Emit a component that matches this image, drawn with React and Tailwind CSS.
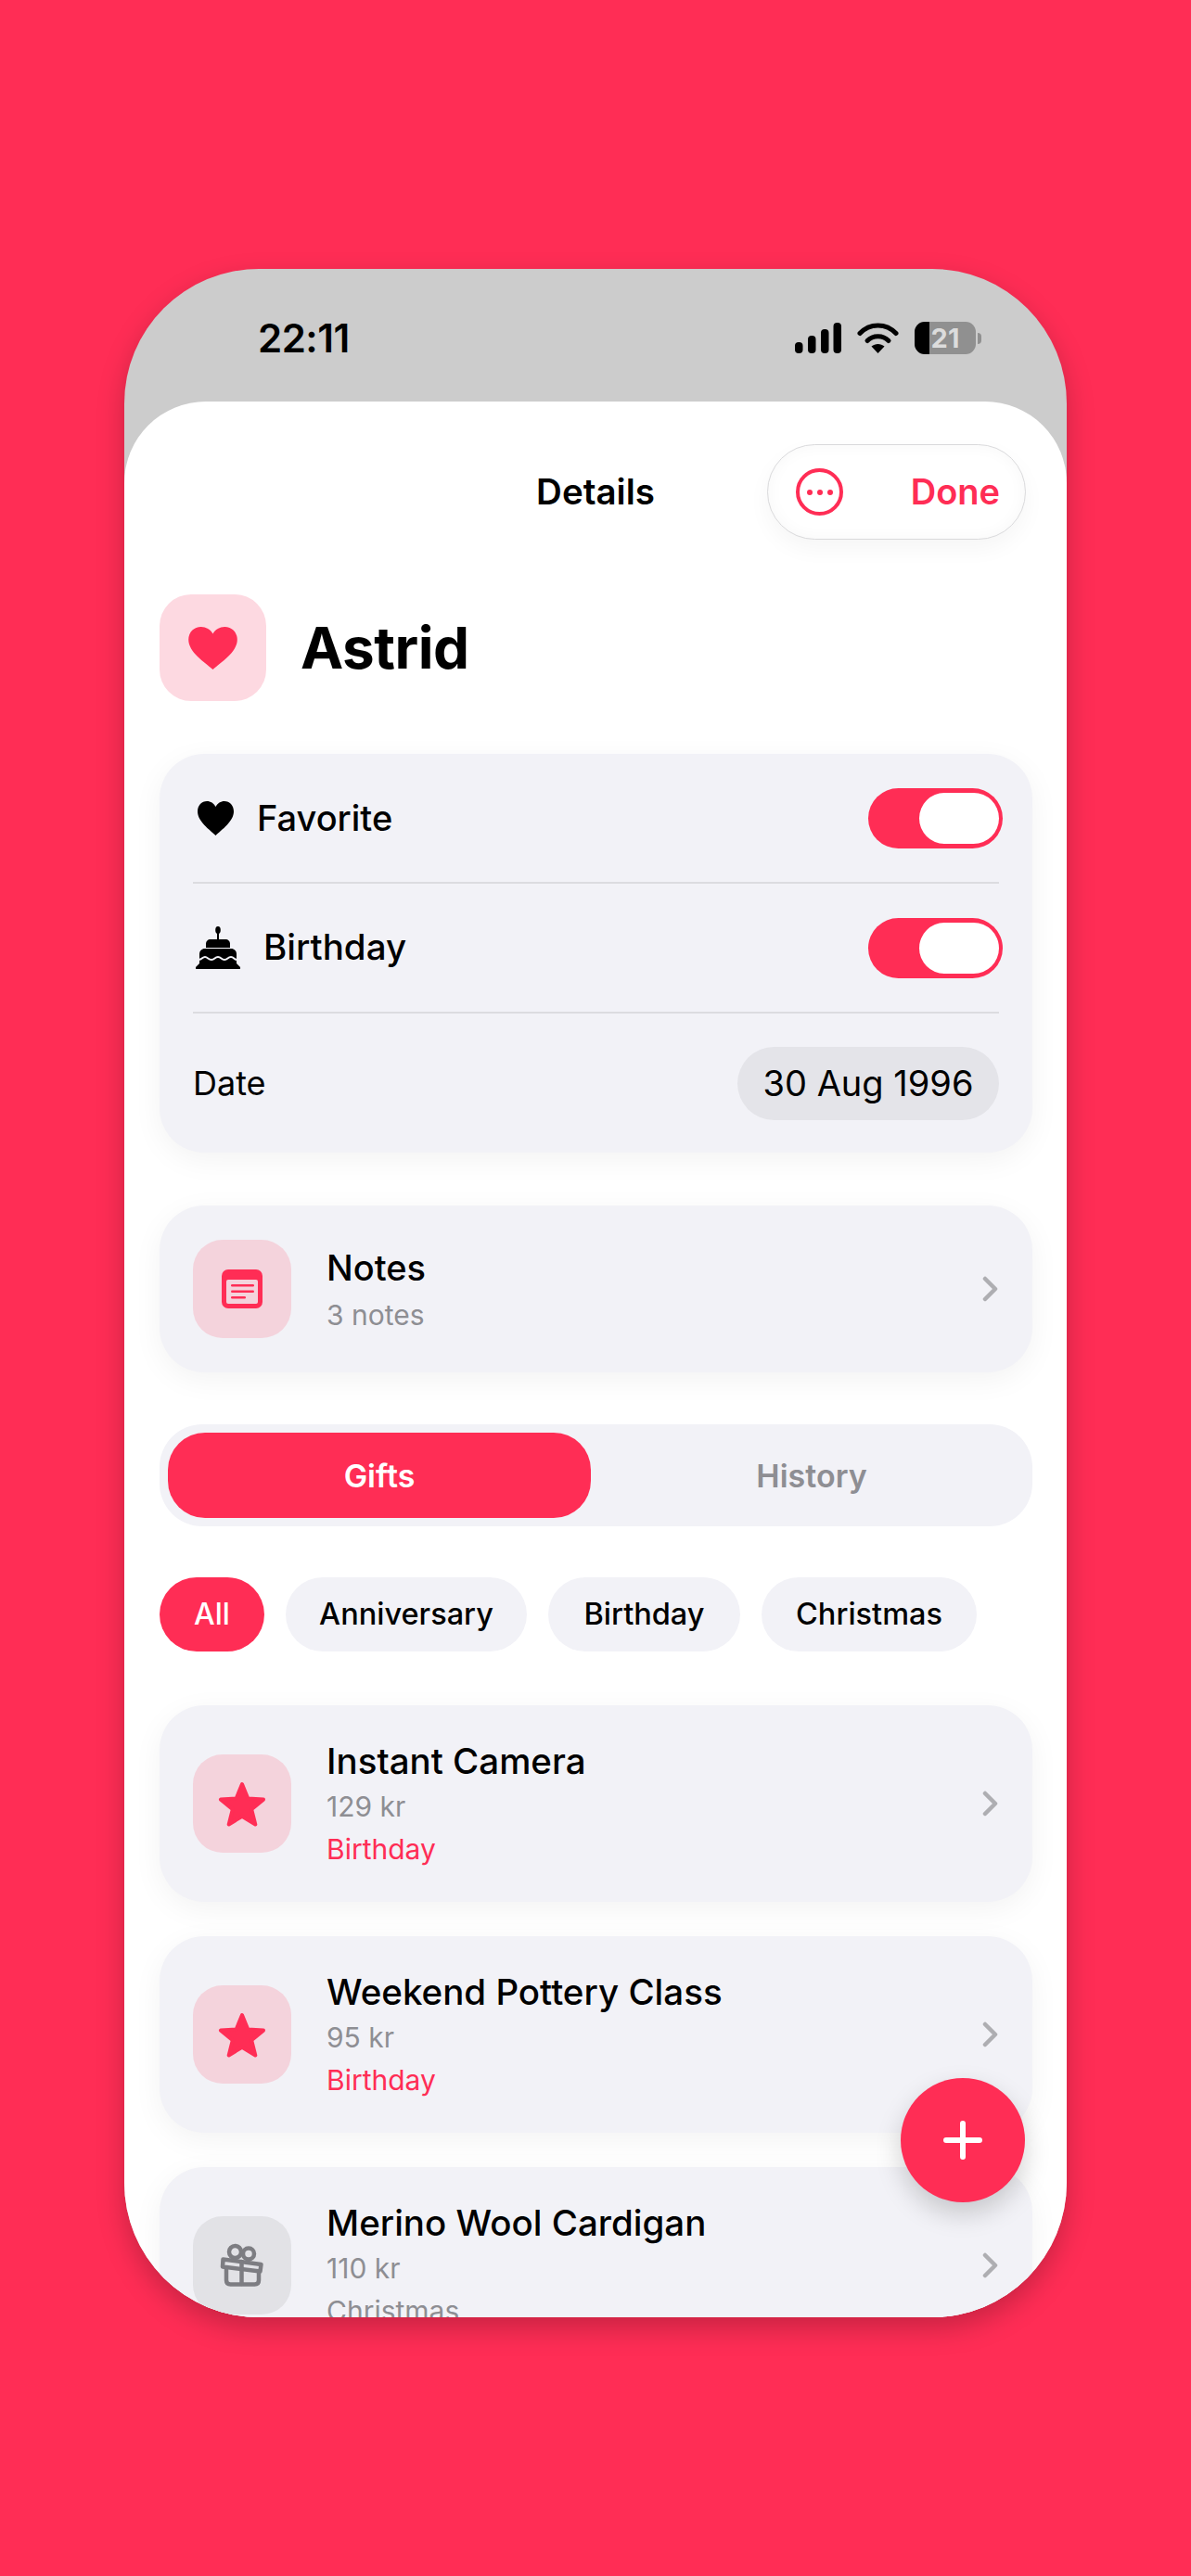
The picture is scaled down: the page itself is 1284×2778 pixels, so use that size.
import React from 'react';

const Heart = ({ className, stretch }) => (
  <svg viewBox="0 0 24 21" className={className} fill="currentColor" preserveAspectRatio={stretch ? 'none' : 'xMidYMid meet'}>
    <path d="M12 21C8 17.5 0 12.5 0 6.3 0 2.6 2.8 0 6.2 0 8.6 0 10.8 1.3 12 3.4 13.2 1.3 15.4 0 17.8 0 21.2 0 24 2.6 24 6.3 24 12.5 16 17.5 12 21Z" />
  </svg>
);

const Cake = () => (
  <svg viewBox="0 0 48 46" className="w-[48px] h-[46px] text-black" fill="currentColor">
    <ellipse cx="24" cy="4" rx="2.8" ry="4" />
    <rect x="23" y="6" width="2" height="9" />
    <path d="M11 23v-4c0-3 2-5 5-5h16c3 0 5 2 5 5v4z" />
    <path d="M4 40V30c0-3.500 2.500-6 6-6h28c3.500 0 6 2.500 6 6v10z" />
    <path d="M4 40h40l4 4v2H0v-2z" />
    <path d="M3 36c4 0 4-3 7-3s3.500 3 7 3 3.500-3 7-3 3.500 3 7 3 3.500-3 7-3 3 3 7 3" fill="none" stroke="#f2f2f7" strokeWidth="2" />
  </svg>
);

const Chevron = () => (
  <svg viewBox="0 0 19 28" className="w-[19px] h-[28px] text-[#aeaeb2]" fill="none" stroke="currentColor" strokeWidth="4.500" strokeLinecap="round" strokeLinejoin="round">
    <path d="M4 3l11 11L4 25" />
  </svg>
);

const Star = () => (
  <svg viewBox="0 0 52 49" className="w-[52px] h-[49px] text-[#ff2d55]" fill="currentColor" stroke="currentColor" strokeWidth="4" strokeLinejoin="round">
    <path d="M26 3l6.300 15.400 16.700 1.200-12.800 10.700 4.100 16.200L26 37.700l-14.300 8.800 4.100-16.200L3 19.600l16.700-1.200z" />
  </svg>
);

const NoteIcon = () => (
  <svg viewBox="0 0 44 42" className="w-[44px] h-[42px]">
    <rect width="44" height="42" rx="7" fill="#ff2d55" />
    <rect x="5" y="11" width="34" height="26" rx="2" fill="#f4d3dc" />
    <rect x="10" y="16" width="25" height="2.600" rx="1.300" fill="#ff2d55" />
    <rect x="10" y="22.500" width="25" height="2.600" rx="1.300" fill="#ff2d55" />
    <rect x="10" y="29" width="16" height="2.600" rx="1.300" fill="#ff2d55" />
  </svg>
);

const GiftIcon = () => (
  <svg viewBox="0 0 64 64" className="w-[64px] h-[64px] text-[#7d7d82]" fill="none" stroke="currentColor" strokeWidth="4.500" strokeLinejoin="round" strokeLinecap="round">
    <path d="M11.500 25.500L52.500 31l-1 7.500-40.500-5z" />
    <path d="M15 35v13c0 3 1.500 4.500 4.500 4.500h26c3 0 4.500-1.500 4.500-4.500V38" />
    <path d="M31.500 28v24" />
    <circle cx="24.500" cy="17.500" r="6.500" />
    <circle cx="39" cy="19.500" r="6" />
  </svg>
);

const Signal = () => (
  <svg viewBox="0 0 50 33" className="w-[50px] h-[33px]" fill="#000">
    <rect x="0" y="21" width="8.500" height="12" rx="4" />
    <rect x="14" y="14" width="8.500" height="19" rx="4" />
    <rect x="28" y="7" width="8.500" height="26" rx="4" />
    <rect x="41.500" y="0" width="8.500" height="33" rx="4" />
  </svg>
);

const Wifi = () => (
  <svg viewBox="0 0 45 33" className="w-[45px] h-[33px]" fill="none" stroke="#000" strokeWidth="5" strokeLinecap="round">
    <path d="M3 11.500C13.500 0 31.500 0 42 11.500" />
    <path d="M11 19.500C17 13 28 13 34 19.500" />
    <path d="M22.500 33l-7-7.500c4-3.500 10-3.500 14 0z" fill="#000" stroke="none" />
  </svg>
);

const Toggle = () => (
  <div className="w-[145px] h-[65px] rounded-full bg-[#ff2d55] flex items-center justify-end pr-[4px]">
    <div className="w-[86px] h-[55px] rounded-full bg-white" />
  </div>
);

const Tile = ({ className, children }) => (
  <div className={`w-[106px] h-[106px] rounded-[32px] flex items-center justify-center shrink-0 ${className}`}>
    {children}
  </div>
);

const gifts = [
  { name: 'Instant Camera', price: '129 kr', tag: 'Birthday', fav: true },
  { name: 'Weekend Pottery Class', price: '95 kr', tag: 'Birthday', fav: true },
  { name: 'Merino Wool Cardigan', price: '110 kr', tag: 'Christmas', fav: false },
];

const filters = [
  { label: 'Anniversary', width: 'w-[260px]' },
  { label: 'Birthday', width: 'w-[207px]' },
  { label: 'Christmas', width: 'w-[232px]' },
];

export default function App() {
  return (
    <div className="w-[1284px] h-[2778px] bg-[#ff2d55] pt-[290px] pl-[134px] font-['Inter',sans-serif] text-black">
      <div className="relative w-[1016px] h-[2209px] rounded-[145px] bg-[#cccccc] overflow-hidden flex flex-col shadow-[0_12px_30px_rgba(0,0,0,0.22)]">
        {/* status bar */}
        <div className="h-[143px] shrink-0 flex items-start justify-between pl-[144px] pr-[92px] pt-[50px]">
          <span className="text-[42px] leading-[50px] font-semibold tracking-[-0.5px]">22:11</span>
          <div className="flex items-center gap-[17px] pt-[7px]">
            <Signal />
            <Wifi />
            <div className="flex items-center gap-[2px]">
              <div className="relative w-[66px] h-[35px] rounded-[11px] overflow-hidden bg-[#909090] flex">
                <div className="w-[16px] bg-black" />
                <span className="absolute inset-0 flex items-center justify-center text-[29px] font-bold text-[#dcdcdc]">21</span>
              </div>
              <div className="w-[4px] h-[12px] rounded-r-full bg-[#909090]" />
            </div>
          </div>
        </div>

        {/* sheet */}
        <div className="flex-1 min-h-0 overflow-hidden bg-white rounded-t-[88px] flex flex-col pt-[46px]">
          <div className="grid grid-cols-[1fr_auto_1fr] items-center px-[44px] shrink-0">
            <div />
            <span className="text-[38.5px] font-semibold">Details</span>
            <div className="flex justify-end">
              <div className="w-[279px] h-[103px] rounded-full bg-white border border-[#d9d9db] shadow-[0_10px_24px_rgba(0,0,0,0.04),inset_0_0_18px_rgba(0,0,0,0.035)] flex items-center justify-between pl-[30px] pr-[27px]">
                <div className="w-[51px] h-[51px] rounded-full border-[4px] border-[#ff2d55] flex items-center justify-center gap-[5px]">
                  <span className="w-[6px] h-[6px] rounded-full bg-[#ff2d55]" />
                  <span className="w-[6px] h-[6px] rounded-full bg-[#ff2d55]" />
                  <span className="w-[6px] h-[6px] rounded-full bg-[#ff2d55]" />
                </div>
                <span className="text-[38px] font-semibold text-[#ff2d55]">Done</span>
              </div>
            </div>
          </div>

          <div className="pl-[38px] pr-[37px] flex flex-col">
            <div className="mt-[59px] flex items-center gap-[37px]">
              <div className="w-[115px] h-[115px] rounded-[34px] bg-[#fdd9e1] flex items-center justify-center">
                <Heart className="w-[53px] h-[46px] text-[#ff2d55]" />
              </div>
              <span className="text-[62px] font-bold tracking-[-0.5px]">Astrid</span>
            </div>

            {/* settings card */}
            <div className="mt-[57px] h-[430px] rounded-[48px] bg-[#f2f2f7] shadow-[0_8px_32px_rgba(0,0,0,0.05)] px-[36px] flex flex-col">
              <div className="h-[140px] flex items-center justify-between border-b-2 border-[#dcdce0]">
                <div className="flex items-center gap-[25px] pl-[5px]">
                  <Heart stretch className="w-[39px] h-[37px] text-black" />
                  <span className="text-[38px] font-medium">Favorite</span>
                </div>
                <div className="-mr-[4px]"><Toggle /></div>
              </div>
              <div className="h-[140px] flex items-center justify-between border-b-2 border-[#dcdce0]">
                <div className="flex items-center gap-[25px] pl-[3px]">
                  <Cake />
                  <span className="text-[38.5px] font-medium">Birthday</span>
                </div>
                <div className="-mr-[4px]"><Toggle /></div>
              </div>
              <div className="flex-1 flex items-center justify-between">
                <span className="text-[36px]">Date</span>
                <div className="w-[282px] h-[79px] rounded-full bg-[#e4e4e9] flex items-center justify-center text-[38px]">
                  30 Aug 1996
                </div>
              </div>
            </div>

            {/* notes */}
            <div className="mt-[57px] h-[180px] rounded-[48px] bg-[#f2f2f7] shadow-[0_8px_32px_rgba(0,0,0,0.05)] pl-[36px] pr-[36px] flex items-center">
              <Tile className="bg-[#f4d3dc]"><NoteIcon /></Tile>
              <div className="ml-[38px] flex-1 flex flex-col pt-[2px]">
                <span className="text-[38px] leading-[50px] font-medium">Notes</span>
                <span className="text-[30px] leading-[44px] text-[#8e8e93] mt-[4px]">3 notes</span>
              </div>
              <Chevron />
            </div>

            {/* segmented */}
            <div className="mt-[56px] h-[110px] rounded-[46px] bg-[#f2f2f7] p-[9px] flex">
              <div className="w-[456px] rounded-[40px] bg-[#ff2d55] text-white text-[34px] font-semibold flex items-center justify-center">Gifts</div>
              <div className="flex-1 pl-[9px] text-[#8e8e93] text-[34px] font-semibold flex items-center justify-center">History</div>
            </div>

            {/* filters */}
            <div className="mt-[55px] flex gap-[23px]">
              <div className="w-[113px] h-[80px] rounded-full bg-[#ff2d55] text-white text-[32px] font-medium flex items-center justify-center">All</div>
              {filters.map((f) => (
                <div key={f.label} className={`${f.width} h-[80px] rounded-full bg-[#f2f2f7] text-[32.5px] font-medium flex items-center justify-center`}>
                  {f.label}
                </div>
              ))}
            </div>

            {/* gifts */}
            <div className="mt-[58px] flex flex-col gap-[37px]">
              {gifts.map((g) => (
                <div key={g.name} className="h-[212px] shrink-0 rounded-[48px] bg-[#f2f2f7] shadow-[0_8px_32px_rgba(0,0,0,0.05)] px-[36px] flex items-center">
                  <Tile className={g.fav ? 'bg-[#f4d3dc]' : 'bg-[#e2e2e6]'}>
                    {g.fav ? <Star /> : <GiftIcon />}
                  </Tile>
                  <div className="ml-[38px] flex-1 flex flex-col">
                    <span className="text-[38.5px] leading-[50px] font-medium">{g.name}</span>
                    <span className="text-[30px] leading-[46px] text-[#8e8e93] mt-[1px]">{g.price}</span>
                    <span className={`text-[30px] leading-[46px] ${g.fav ? 'text-[#ff2d55]' : 'text-[#8e8e93]'}`}>{g.tag}</span>
                  </div>
                  <Chevron />
                </div>
              ))}
            </div>
          </div>
        </div>

        {/* add button */}
        <div className="absolute left-[837px] top-[1951px] w-[134px] h-[134px] rounded-full bg-[#ff2d55] shadow-[0_12px_28px_rgba(0,0,0,0.18)] flex items-center justify-center">
          <svg viewBox="0 0 42 42" className="w-[42px] h-[42px]" fill="none" stroke="#fff" strokeWidth="6" strokeLinecap="round">
            <path d="M21 3v36M3 21h36" />
          </svg>
        </div>
      </div>
    </div>
  );
}
